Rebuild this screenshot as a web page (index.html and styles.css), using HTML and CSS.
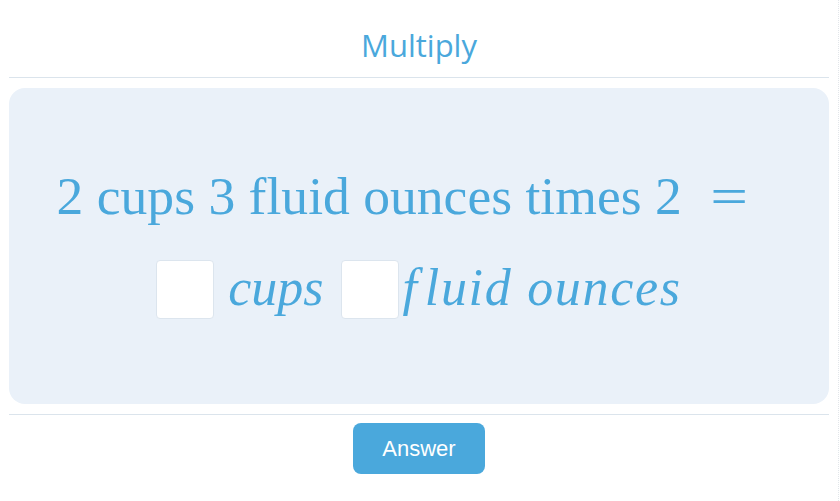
FILE: index.html
```html
<!DOCTYPE html>
<html lang="en">
<head>
    <meta charset="UTF-8">
    <meta name="viewport" content="width=device-width, initial-scale=1.0">
    <title>Multiply</title>
    <link rel="stylesheet" href="styles.css">
</head>
<body>
    <div class="quiz">
        <h1 class="quiz-title">Multiply</h1>
        <div class="question-card">
            <div class="question-line">
                <span>2 cups 3 fluid ounces times 2</span>
                <span class="equals">=</span>
            </div>
            <div class="answer-line">
                <input class="answer-box" type="text" aria-label="cups">
                <span class="unit">cups</span>
                <input class="answer-box" type="text" aria-label="fluid ounces">
                <span class="unit"><span class="letter-f">f</span>luid ounces</span>
            </div>
        </div>
        <div class="quiz-footer">
            <button class="answer-btn">Answer</button>
        </div>
    </div>
</body>
</html>
```

FILE: styles.css
```css
body {
    margin: 0;
    background: #fff;
    font-family: 'Open Sans', sans-serif;
}

.quiz {
    width: 820px;
    margin-left: 9px;
    min-height: 501px;
    box-sizing: border-box;
    position: relative;
}

.quiz::after {
    content: '';
    position: absolute;
    top: 0;
    bottom: 0;
    left: 829px;
    border-right: 1px dotted #e2e6ea;
}

.quiz-title {
    margin: 0;
    height: 77px;
    line-height: 90px;
    text-align: center;
    font-size: 31px;
    font-weight: 400;
    color: #4aa8dc;
    border-bottom: 1px solid #dbe4ec;
}

.question-card {
    margin-top: 10px;
    height: 316px;
    background: #eaf1f9;
    border-radius: 16px;
    display: flex;
    flex-direction: column;
    justify-content: center;
    align-items: center;
    color: #4aa8dc;
    font-family: 'Liberation Serif', 'Times New Roman', serif;
    font-size: 53.6px;
}

.question-line {
    line-height: 60px;
    margin-top: -8px;
    padding-right: 37px;
}

.equals {
    display: inline-block;
    margin-left: 19px;
    transform: scaleX(1.25);
}

.answer-line {
    display: flex;
    align-items: center;
    margin-top: 32px;
    font-size: 52px;
    font-style: italic;
    line-height: 60px;
}

.answer-box {
    width: 58px;
    height: 59px;
    box-sizing: border-box;
    border: 1px solid #dce5ee;
    border-radius: 4px;
    background: #fff;
    margin: 0;
    padding: 0;
    margin-top: 2px;
}

.unit {
    margin: 0 17px 0 14px;
}

.unit:last-child {
    margin: 0 0 0 4px;
    letter-spacing: 1.7px;
}

.letter-f {
    margin-right: 6px;
}

.quiz-footer {
    margin-top: 10px;
    border-top: 1px solid #dbe4ec;
    padding-top: 8px;
    display: flex;
    justify-content: center;
}

.answer-btn {
    width: 132px;
    height: 51px;
    border: none;
    border-radius: 8px;
    background: #4aa8dc;
    color: #fff;
    font-family: 'Liberation Sans', Arial, sans-serif;
    font-size: 22px;
    cursor: pointer;
}
```
